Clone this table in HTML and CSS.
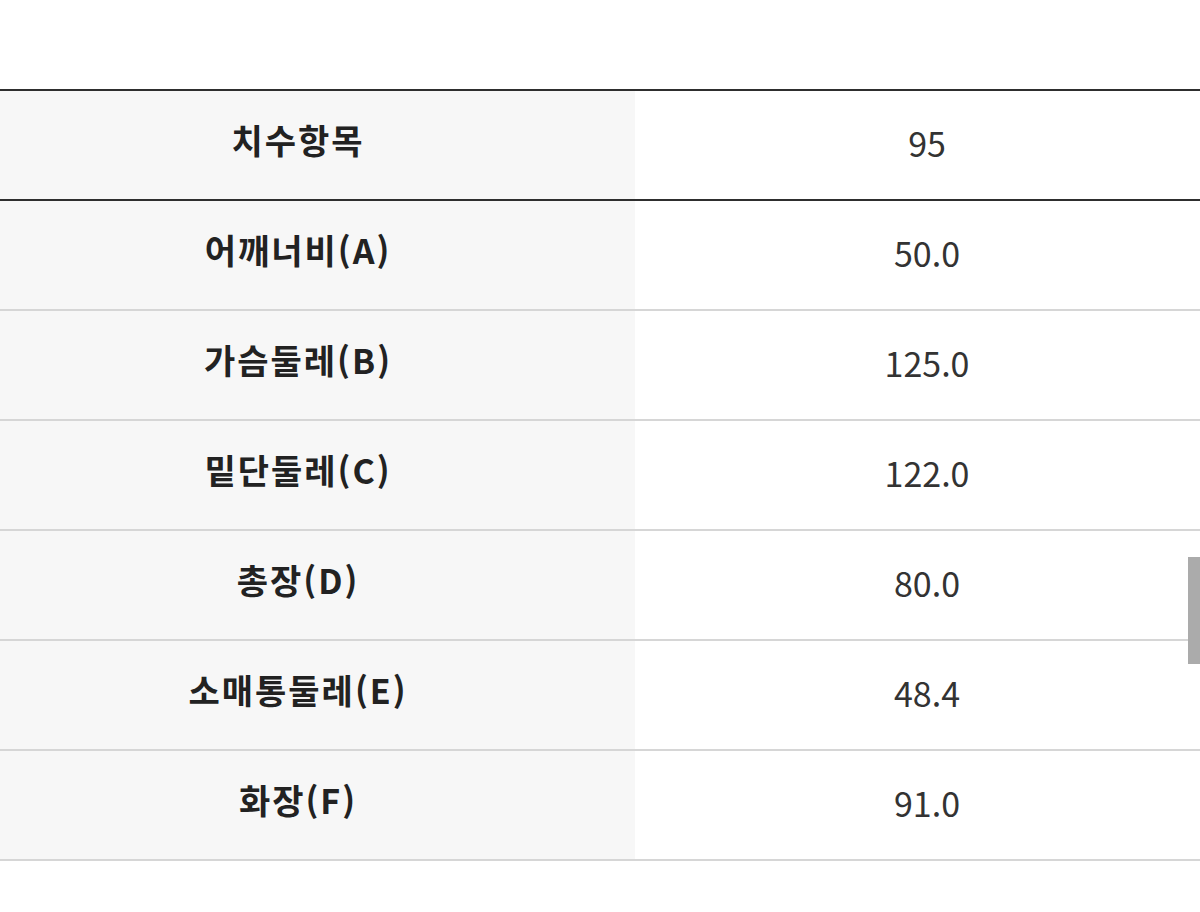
FILE: index.html
```html
<!DOCTYPE html>
<html lang="ko">
<head>
<meta charset="utf-8">
<link rel="stylesheet" href="styles.css">
</head>
<body>
<div class="page">
  <table class="size-table">
    <thead>
      <tr><th class="label">치수항목</th><th class="value">95</th></tr>
    </thead>
    <tbody>
      <tr><td class="label">어깨너비(A)</td><td class="value">50.0</td></tr>
      <tr><td class="label">가슴둘레(B)</td><td class="value">125.0</td></tr>
      <tr><td class="label">밑단둘레(C)</td><td class="value">122.0</td></tr>
      <tr><td class="label">총장(D)</td><td class="value">80.0</td></tr>
      <tr><td class="label">소매통둘레(E)</td><td class="value">48.4</td></tr>
      <tr><td class="label">화장(F)</td><td class="value">91.0</td></tr>
    </tbody>
  </table>
  <div class="scroll-thumb"></div>
</div>
</body>
</html>
```

FILE: styles.css
```css
html, body {
  margin: 0;
  padding: 0;
  background: #ffffff;
}
body {
  font-family: "Noto Sans CJK KR", "Noto Sans", sans-serif;
  width: 1200px;
  height: 912px;
  overflow: hidden;
}
.page {
  position: relative;
  padding-top: 89px;
  height: 823px;
}
.size-table {
  width: 1200px;
  border-collapse: collapse;
  table-layout: fixed;
  border-top: 2px solid #2e2e2e;
}
.size-table th,
.size-table td {
  padding: 0;
  font-size: 34px;
  text-align: center;
  vertical-align: middle;
  border-bottom: 2px solid #d6d6d6;
  line-height: 1;
}
.size-table thead th {
  border-bottom: 2px solid #2e2e2e;
}
.size-table .label {
  width: 592px;
  height: 98px;
  padding: 0 41px 10px 2px;
  background: #f7f7f7;
  color: #222222;
  font-weight: 700;
  letter-spacing: 2px;
}
.size-table .value {
  height: 104px;
  padding: 0 0 4px 19px;
  background: #ffffff;
  color: #333333;
  font-weight: 400;
}
.scroll-thumb {
  position: absolute;
  right: 0;
  top: 557px;
  width: 12px;
  height: 107px;
  background: #ababab;
}
```
